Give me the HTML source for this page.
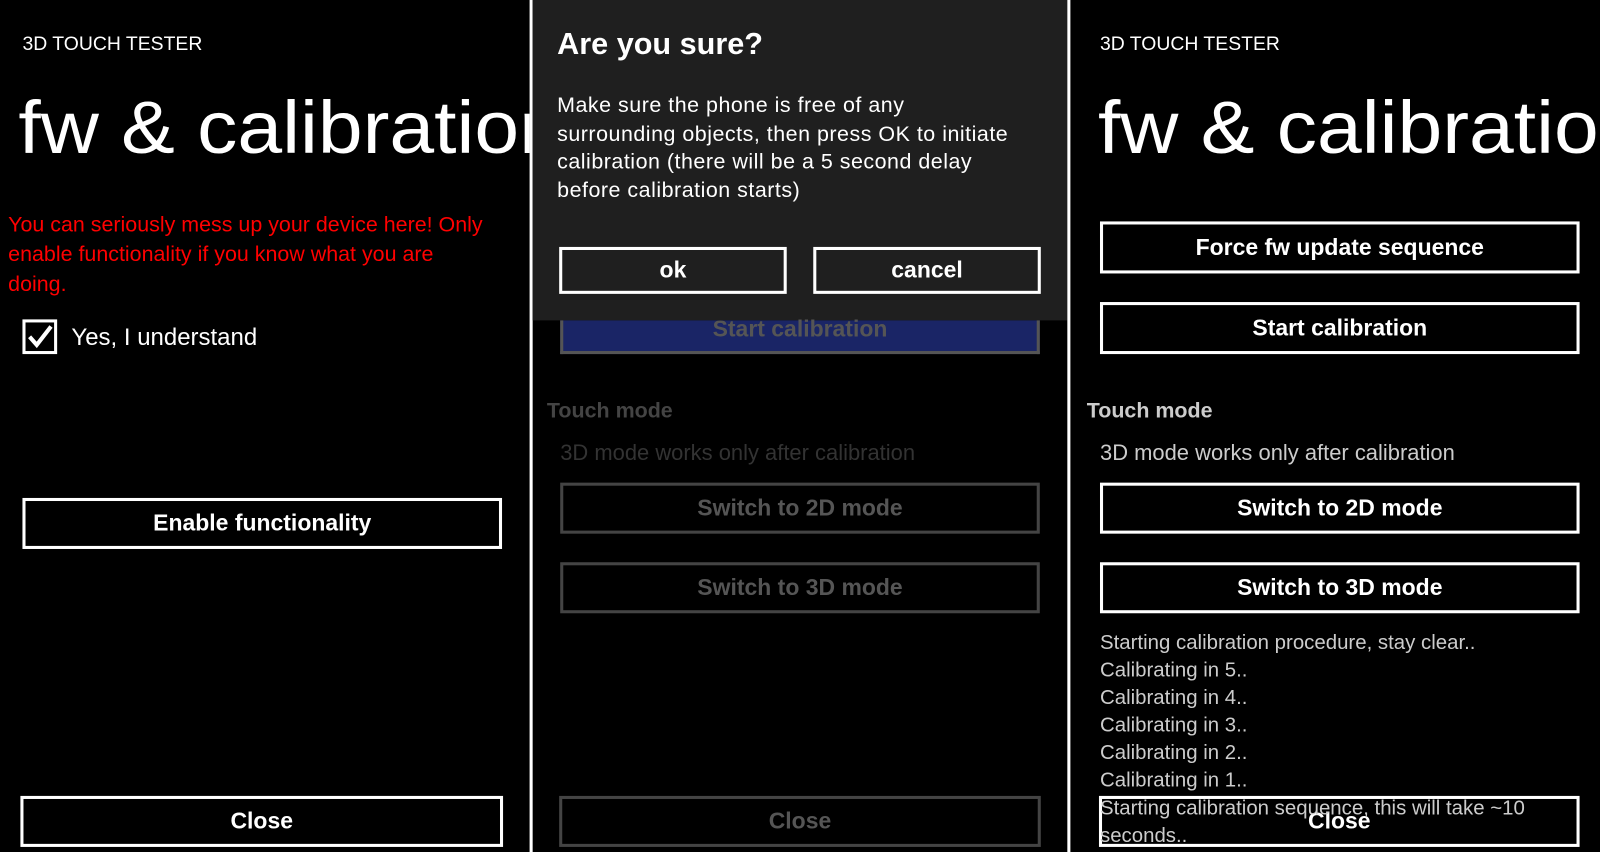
<!DOCTYPE html>
<html><head><meta charset="utf-8"><style>
html,body{margin:0;padding:0;background:#000;width:1600px;height:852px;overflow:hidden}
#w{position:absolute;left:0;top:0;width:1568px;height:835px;transform:scale(1.0204);transform-origin:0 0;font-family:"Liberation Sans","DejaVu Sans",sans-serif;color:#fff;overflow:hidden}
.a{position:absolute;white-space:nowrap}
.btn{position:absolute;box-sizing:border-box;border:3px solid #fff;display:flex;align-items:center;justify-content:center;font-weight:bold;font-size:22.5px;color:#fff}
.line{position:absolute;top:0;width:3px;height:835px;background:#fff}
.small{font-size:20px;line-height:27px}
.big{font-size:73px;transform:scaleX(1.08);transform-origin:0 0}
.clip{position:absolute;top:0;height:835px;overflow:hidden}
</style></head><body><div id="w">
<!-- panel 1 -->
<div class="clip" style="left:0;width:519px">
<div class="a" style="left:22px;top:33px;font-size:19px">3D TOUCH TESTER</div>
<div class="a big" style="left:18px;top:84px">fw &amp; calibration</div>
</div>
<div class="a" style="left:8px;top:206px;font-size:21px;line-height:29px;color:#f00">You can seriously mess up your device here! Only<br>enable functionality if you know what you are<br>doing.</div>
<div class="a" style="left:22px;top:313px;width:28px;height:28px;border:3px solid #fff"><svg width="28" height="28" viewBox="0 0 28 28"><path d="M4 14 L11 22 L25 4" stroke="#fff" stroke-width="4" fill="none"/></svg></div>
<div class="a" style="left:70px;top:317px;font-size:23.5px">Yes, I understand</div>
<div class="btn" style="left:22px;top:488px;width:470px;height:50px">Enable functionality</div>
<div class="btn" style="left:20px;top:780px;width:473px;height:50px">Close</div>
<div class="line" style="left:519px"></div>
<!-- panel 2 -->
<div class="a" style="left:522px;top:0;width:524px;height:314px;background:#1f1f1f"></div>
<div class="a" style="left:546px;top:27px;font-size:30px;font-weight:bold">Are you sure?</div>
<div class="a" style="left:546px;top:90px;font-size:21px;letter-spacing:0.5px;line-height:27.5px">Make sure the phone is free of any<br>surrounding objects, then press OK to initiate<br>calibration (there will be a 5 second delay<br>before calibration starts)</div>
<div class="btn" style="left:548px;top:242px;width:223px;height:46px">ok</div>
<div class="btn" style="left:797px;top:242px;width:223px;height:46px">cancel</div>
<div class="btn" style="left:549px;top:314px;width:470px;height:33px;border-color:#555;border-top:none;background:#1a2566;color:#555;align-items:flex-start"><span style="margin-top:-4px">Start calibration</span></div>
<div class="a" style="left:536px;top:391px;font-size:21px;font-weight:bold;color:#444">Touch mode</div>
<div class="a" style="left:549px;top:432px;font-size:21.5px;color:#333">3D mode works only after calibration</div>
<div class="btn" style="left:549px;top:473px;width:470px;height:50px;border-color:#444;color:#555">Switch to 2D mode</div>
<div class="btn" style="left:549px;top:551px;width:470px;height:50px;border-color:#444;color:#555">Switch to 3D mode</div>
<div class="btn" style="left:548px;top:780px;width:472px;height:50px;border-color:#444;color:#555">Close</div>
<div class="line" style="left:1046px"></div>
<!-- panel 3 -->
<div class="a" style="left:1078px;top:33px;font-size:19px">3D TOUCH TESTER</div>
<div class="a big" style="left:1076px;top:84px">fw &amp; calibration</div>
<div class="btn" style="left:1078px;top:217px;width:470px;height:51px">Force fw update sequence</div>
<div class="btn" style="left:1078px;top:296px;width:470px;height:51px">Start calibration</div>
<div class="a" style="left:1065px;top:391px;font-size:21px;font-weight:bold;color:#ccc">Touch mode</div>
<div class="a" style="left:1078px;top:432px;font-size:21.5px;color:#ccc">3D mode works only after calibration</div>
<div class="btn" style="left:1078px;top:473px;width:470px;height:50px">Switch to 2D mode</div>
<div class="btn" style="left:1078px;top:551px;width:470px;height:50px">Switch to 3D mode</div>
<div class="btn" style="left:1077px;top:780px;width:471px;height:50px">Close</div>
<div class="a small" style="left:1078px;top:617px;color:#ccc">Starting calibration procedure, stay clear..<br>Calibrating in 5..<br>Calibrating in 4..<br>Calibrating in 3..<br>Calibrating in 2..<br>Calibrating in 1..<br>Starting calibration sequence, this will take ~10<br>seconds..</div>
</div></body></html>
